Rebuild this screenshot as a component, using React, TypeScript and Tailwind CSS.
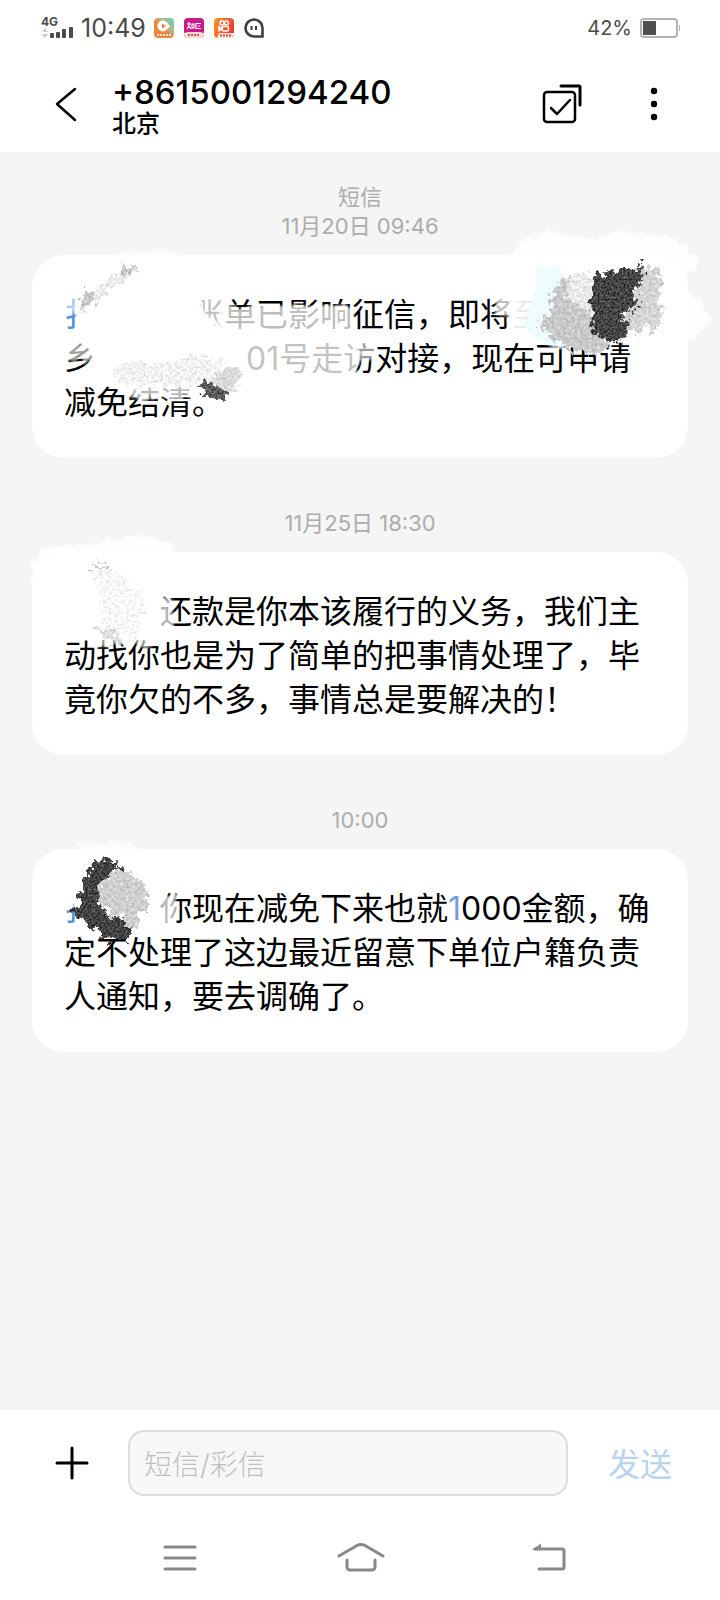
import type { ReactNode } from 'react'

type Thread = {
  id: string
  stamps: string[]
  lines: ReactNode[]
  smudge: ReactNode
}

function SmudgeFilters() {
  return (
    <svg className="absolute size-0" aria-hidden="true">
      <defs>
        <filter id="grain" x="-20%" y="-20%" width="140%" height="140%" colorInterpolationFilters="sRGB">
          <feTurbulence type="fractalNoise" baseFrequency="0.16" numOctaves="3" seed="4" result="edge" />
          <feDisplacementMap in="SourceGraphic" in2="edge" scale="18" xChannelSelector="R" yChannelSelector="G" result="shape" />
          <feTurbulence type="fractalNoise" baseFrequency="0.5" numOctaves="2" seed="9" />
          <feColorMatrix values="1 0 0 0 0  1 0 0 0 0  1 0 0 0 0  0 0 0 0 1" result="noise" />
          <feComposite in="shape" in2="noise" operator="arithmetic" k2="1" k3="0.7" k4="-0.35" />
          <feComposite in2="shape" operator="in" />
        </filter>
        <filter id="dust" x="-20%" y="-20%" width="140%" height="140%" colorInterpolationFilters="sRGB">
          <feTurbulence type="fractalNoise" baseFrequency="0.16" numOctaves="3" seed="7" result="edge" />
          <feDisplacementMap in="SourceGraphic" in2="edge" scale="18" xChannelSelector="R" yChannelSelector="G" result="shape" />
          <feTurbulence type="fractalNoise" baseFrequency="0.35" numOctaves="2" seed="5" />
          <feColorMatrix values="1 0 0 0 0  1 0 0 0 0  1 0 0 0 0  0 0 0 0 1" result="noise" />
          <feComposite in="shape" in2="noise" operator="arithmetic" k2="1" k3="0.3" k4="-0.15" />
          <feComposite in2="shape" operator="in" />
        </filter>
        <filter id="rough" x="-20%" y="-40%" width="140%" height="180%" colorInterpolationFilters="sRGB">
          <feTurbulence type="fractalNoise" baseFrequency="0.12" numOctaves="3" seed="2" result="edge" />
          <feDisplacementMap in="SourceGraphic" in2="edge" scale="14" xChannelSelector="R" yChannelSelector="G" />
          <feGaussianBlur stdDeviation="1" />
        </filter>
      </defs>
    </svg>
  )
}

function Smudge({ children }: { children: ReactNode }) {
  return (
    <svg
      width="656"
      height="203"
      viewBox="0 0 656 203"
      className="pointer-events-none absolute left-0 top-0 overflow-visible"
      aria-hidden="true"
    >
      {children}
    </svg>
  )
}

const threads: Thread[] = [
  {
    id: 'nov-20',
    stamps: ['短信', '11月20日 09:46'],
    lines: [
      <>
        <span className="text-[#4f8fdc]">扌</span>
        {'\u3000\u3000\u3000账单已影响征信，即将至'}
      </>,
      <>
        乡<span className="inline-block w-[150px]" />
        01号走访对接，现在可申请
      </>,
      '减免结清。',
    ],
    smudge: (
      <Smudge>
        <g filter="url(#rough)" fill="#fff">
          <path opacity=".6" d="M72 12 86 -3 118 -6 155 0 170 14Z" />
          <path opacity=".85" d="M466 8 488 -12 515 -26 541 -20 561 -15 581 -23 611 -22 635 -20 651 -10 668 5 661 15 645 28 667 45 680 66 660 85 635 90 600 60 560 50 500 30Z" />
          <path d="M46 30 90 14 160 20 172 60 205 92 214 120 190 136 140 130 104 134 62 100 44 66Z" />
          <path d="M160 34H192V80H160Z" opacity=".75" />
          <path d="M186 51H322V82H186Z" opacity=".74" />
          <path d="M205 82H328V124H205Z" opacity=".76" />
          <path d="M322 84H344V106H322Z" opacity=".6" />
          <path d="M28 76H70V106H28Z" opacity=".62" />
          <path d="M28 40H46V58H28Z" opacity=".5" />
          <path d="M98 126H162V143H98Z" opacity=".72" />
          <path d="M462 38H484V62H462Z" opacity=".75" />
          <path d="M476 36H552V80H476Z" opacity=".92" />
        </g>
        <path filter="url(#rough)" fill="#effcfd" d="M506 12 528 10 536 30 532 60 550 92 520 92 500 80 490 70 500 48Z" />
        <g filter="url(#dust)">
          <path fill="#ececec" d="M48 60 52 42 68 30 94 14 104 16 84 30 66 44Z" />
          <path fill="#c4c4c4" d="M48 54 53 36 62 40 60 50Z" />
          <path fill="#c4c4c4" d="M86 14 94 10 102 15 94 19Z" />
          <path fill="#f2f2f2" d="M80 114 104 108 136 112 160 100 190 106 186 130 150 130 90 128Z" />
          <path fill="#dadada" d="M178 128 194 112 208 112 204 134 194 138Z" />
          <path fill="#ebebeb" d="M532 22 548 18 564 22 564 64 546 60 526 46Z" />
          <path fill="#c9c9c9" d="M520 36 532 22 538 24 532 42 564 60 578 90 562 100 540 96 518 82 506 66 518 58Z" />
          <path fill="#d4d4d4" d="M604 14 624 12 629 26 628 64 621 82 616 68 605 80 586 62 598 52 604 38Z" />
        </g>
        <g filter="url(#grain)">
          <path fill="#5a5a5a" d="M164 132 172 124 198 138 186 147Z" />
          <path fill="#444" d="M560 22 576 16 602 14 613 8 610 26 602 38 606 48 600 56 590 62 598 74 594 84 576 87 562 80 559 48Z" />
        </g>
      </Smudge>
    ),
  },
  {
    id: 'nov-25',
    stamps: ['11月25日 18:30'],
    lines: [
      '\u3000\u3000\u3000还款是你本该履行的义务，我们主',
      '动找你也是为了简单的把事情处理了，毕',
      '竟你欠的不多，事情总是要解决的！',
    ],
    smudge: (
      <Smudge>
        <g filter="url(#rough)" fill="#fff">
          <path opacity=".85" d="M2 56 -1 14 10 -2 34 -6 58 -7 78 -13 108 -16 136 -12 148 4 100 30Z" />
          <path d="M126 44H140V80H126Z" opacity=".7" />
          <path d="M62 78H128V94H62Z" opacity=".6" />
        </g>
        <g filter="url(#dust)">
          <path fill="#fafafa" d="M66 18 84 20 106 44 112 60 104 82 76 78 68 56Z" />
          <path fill="#d0d0d0" d="M57 13H77V17H57Z" />
          <path fill="#dcdcdc" d="M62 74 74 76 90 86 86 94 74 86Z" />
        </g>
      </Smudge>
    ),
  },
  {
    id: 'today',
    stamps: ['10:00'],
    lines: [
      <>
        <span className="text-[#4f8fdc]">扌</span>
        {'\u3000\u3000你现在减免下来也就'}
        <span className="text-[#6f9fdc]">1</span>000金额，确
      </>,
      '定不处理了这边最近留意下单位户籍负责',
      '人通知，要去调确了。',
    ],
    smudge: (
      <Smudge>
        <g filter="url(#rough)" fill="#fff">
          <path opacity=".7" d="M44 8 46 -5 70 -3 84 -8 104 -6 110 8Z" />
          <path d="M30 36H62V58H30Z" />
          <path d="M126 44H146V78H126Z" opacity=".72" />
        </g>
        <path
          filter="url(#grain)"
          fill="#424242"
          d="M61 13 78 11 90 19 68 34 65 48 78 68 88 66 101 78 93 92 75 91 55 76 36 60 48 56 46 44 53 41 50 34 56 21Z"
        />
        <path
          filter="url(#dust)"
          fill="#cfcfcf"
          d="M68 34 85 20 98 23 115 38 114 48 118 57 107 64 107 78 95 76 86 66 78 68 65 48Z"
        />
      </Smudge>
    ),
  },
]

function StatusBar() {
  return (
    <div className="flex h-14 items-center pl-[41px] pr-10 text-[#4a4a4a]">
      <div className="relative mr-2 h-6 w-8">
        <span className="absolute left-0 top-0 text-xs font-bold leading-3">4G</span>
        <svg viewBox="0 0 32 24" className="size-full" aria-hidden="true">
          <path fill="#c9c9c9" d="M4 12 7 16H1ZM4 22 1 18H7Z" />
          <g fill="currentColor">
            <rect x="9" y="17" width="4" height="5" rx="1" />
            <rect x="15" y="16" width="4" height="6" rx="1" />
            <rect x="21" y="13" width="4" height="9" rx="1" />
            <rect x="28" y="11" width="4" height="11" rx="1" />
          </g>
        </svg>
      </div>
      <span className="text-[25px] leading-8">10:49</span>
      <div className="ml-2 flex gap-[10px]">
        <svg width="20" height="20" viewBox="0 0 20 20" aria-hidden="true">
          <defs>
            <linearGradient id="reel" x1="1" y1="0" x2="0.2" y2="0.8">
              <stop offset="0" stopColor="#5ed3bd" />
              <stop offset="0.45" stopColor="#b5b98a" />
              <stop offset="0.7" stopColor="#ef8540" />
            </linearGradient>
          </defs>
          <rect width="20" height="20" rx="4" fill="url(#reel)" />
          <path fill="#fff" d="M9 2.500a5.500 5.500 0 1 0 2 10.600l5-4.600-3-4A5.500 5.500 0 0 0 9 2.500Z" />
          <path fill="#ef7d3c" d="M8 5.500 12 8 8 10.500Z" />
          <path stroke="#fde3cf" strokeWidth="2" strokeDasharray="2 1" d="M3 17H17" />
        </svg>
        <svg width="20" height="20" viewBox="0 0 20 20" aria-hidden="true">
          <rect width="20" height="20" rx="4" fill="#c81a8c" />
          <path fill="#fbd9cf" d="M0 15 4 14H16L20 15V16a4 4 0 0 1-4 4H4a4 4 0 0 1-4-4Z" />
          <path fill="none" stroke="#fff" strokeWidth="1.200" d="M3 6H7M5 4V8L3 11M5 8 7 11M8 6H10V10H8ZM17 5.500H12V10.500H17M14 8H16" />
          <path stroke="#d6536c" strokeWidth="2" strokeDasharray="2 1" d="M4 17H16" />
        </svg>
        <svg width="20" height="20" viewBox="0 0 20 20" aria-hidden="true">
          <defs>
            <linearGradient id="kuai" x1="0" y1="0" x2="1" y2="0.5">
              <stop offset="0" stopColor="#f79a2e" />
              <stop offset="1" stopColor="#ee3a30" />
            </linearGradient>
          </defs>
          <rect width="20" height="20" rx="4" fill="url(#kuai)" />
          <path fill="#fde7da" d="M5 15H20V16a4 4 0 0 1-4 4H3Z" />
          <g fill="none" stroke="#fff" strokeWidth="1.500">
            <circle cx="8" cy="5" r="2" />
            <circle cx="12.500" cy="5" r="2" />
            <rect x="8" y="8.500" width="6.500" height="4.500" rx="1.500" />
            <path d="M5 9 8 10.500 5 12.500Z" />
          </g>
          <path stroke="#e0484a" strokeWidth="2" strokeDasharray="2 1" d="M6 17.500H17" />
        </svg>
        <svg width="20" height="20" viewBox="0 0 20 20" fill="none" stroke="#3f3f3f" aria-hidden="true">
          <path strokeWidth="2.600" d="M10 1.500A8.500 8.500 0 1 0 10 18.500H18.500V10A8.500 8.500 0 0 0 10 1.500Z" />
          <path strokeWidth="2" d="M7.500 8V12M12 8V12" />
        </svg>
      </div>
      <span className="ml-auto mr-2 text-[20px] leading-7">42%</span>
      <svg width="40" height="20" viewBox="0 0 40 20" aria-label="Battery 42%">
        <rect x="1" y="1" width="36" height="18" rx="3" fill="none" stroke="#b4b4b4" strokeWidth="2" />
        <rect x="3" y="3" width="13" height="14" fill="#4f4f4f" />
        <path stroke="#b4b4b4" d="M39.500 7V13" />
      </svg>
    </div>
  )
}

function ChatHeader() {
  return (
    <header className="flex h-24 items-center pl-12 pr-12">
      <button type="button" aria-label="返回" className="flex size-9 items-center justify-center">
        <svg width="36" height="36" viewBox="0 0 36 36" fill="none" stroke="#000" strokeWidth="2.500" strokeLinecap="round" strokeLinejoin="round">
          <path d="M27 3 9 18 27 34" />
        </svg>
      </button>
      <div className="ml-7 flex-1 pt-1">
        <h1 className="text-[33px] font-medium leading-9 text-black">+8615001294240</h1>
        <p className="text-2xl font-medium leading-7 text-black">北京</p>
      </div>
      <button type="button" aria-label="选择" className="mr-[54px]">
        <svg width="40" height="40" viewBox="0 0 40 40" fill="none" stroke="#000" strokeWidth="2.500" strokeLinecap="round" strokeLinejoin="round">
          <rect x="2" y="8" width="31" height="30" rx="3" />
          <path d="M19 2H37a1 1 0 0 1 1 1V21" strokeWidth="3" />
          <path d="M9 24 15 30 28 16" />
        </svg>
      </button>
      <button type="button" aria-label="更多" className="flex h-10 w-9 items-center justify-center">
        <svg width="8" height="34" viewBox="0 0 8 34" fill="#000">
          <circle cx="4" cy="4" r="3.200" />
          <circle cx="4" cy="17" r="3.200" />
          <circle cx="4" cy="30" r="3.200" />
        </svg>
      </button>
    </header>
  )
}

function Composer() {
  return (
    <form className="flex h-[106px] items-center pl-[54px] pr-12" onSubmit={(e) => e.preventDefault()}>
      <button type="button" aria-label="添加" className="mr-[38px]">
        <svg width="36" height="36" viewBox="0 0 36 36" stroke="#000" strokeWidth="3" strokeLinecap="round">
          <path d="M3 18H33M18 3V33" />
        </svg>
      </button>
      <input
        type="text"
        aria-label="短信/彩信"
        placeholder="短信/彩信"
        className="h-[66px] min-w-0 flex-1 rounded-2xl border-2 border-[#dcdcdc] bg-[#f7f7f7] px-[14px] pt-1 text-[28px] font-light text-black outline-none placeholder:text-[#bfbfbf]"
      />
      <button type="submit" className="ml-10 pt-1 text-[32px] leading-10 text-[#b9d3f2]">
        发送
      </button>
    </form>
  )
}

function SystemNav() {
  return (
    <nav className="flex h-[84px] items-center pl-[157px] pr-[147px]">
      <button type="button" aria-label="最近任务" className="mr-[132px]">
        <svg width="48" height="32" viewBox="0 0 48 32" stroke="#888" strokeWidth="3" strokeLinecap="round">
          <path d="M8 5H38M8 16H38M8 27H38" />
        </svg>
      </button>
      <button type="button" aria-label="主屏幕">
        <svg width="48" height="32" viewBox="0 0 48 32" fill="none" stroke="#888" strokeWidth="3" strokeLinecap="round" strokeLinejoin="round">
          <path d="M2 14 20 3.500Q24 1.500 28 3.500L46 14" />
          <path d="M10 18V25a3 3 0 0 0 3 3H35a3 3 0 0 0 3-3V18" />
        </svg>
      </button>
      <button type="button" aria-label="返回上一页" className="ml-auto">
        <svg width="48" height="32" viewBox="0 0 48 32" fill="none" stroke="#888" strokeWidth="3" strokeLinecap="round" strokeLinejoin="round">
          <path d="M10 7H37a2 2 0 0 1 2 2V25a2 2 0 0 1-2 2H14" />
          <path d="M7 8 16 1.500V8Z" fill="#888" stroke="none" />
        </svg>
      </button>
    </nav>
  )
}

export default function App() {
  return (
    <div className="flex min-h-screen flex-col bg-white font-[Inter,'Noto_Sans_CJK_SC',sans-serif]" lang="zh-CN">
      <SmudgeFilters />
      <StatusBar />
      <ChatHeader />
      <main className="flex flex-1 flex-col gap-[51px] bg-[#f5f5f5] px-8 pt-[31px]">
        {threads.map((thread) => (
          <section key={thread.id}>
            <div className="mb-[14px] text-center text-[22px] leading-[29px] text-[#acacac]">
              {thread.stamps.map((stamp) => (
                <p key={stamp}>{stamp}</p>
              ))}
            </div>
            <div className="relative rounded-[32px] bg-white px-8 pb-[33px] pt-[38px]">
              <p className="text-[32px] leading-[44px] text-black">
                {thread.lines.map((line, i) => (
                  <span key={i} className="block whitespace-nowrap">
                    {line}
                  </span>
                ))}
              </p>
              {thread.smudge}
            </div>
          </section>
        ))}
      </main>
      <Composer />
      <SystemNav />
    </div>
  )
}
